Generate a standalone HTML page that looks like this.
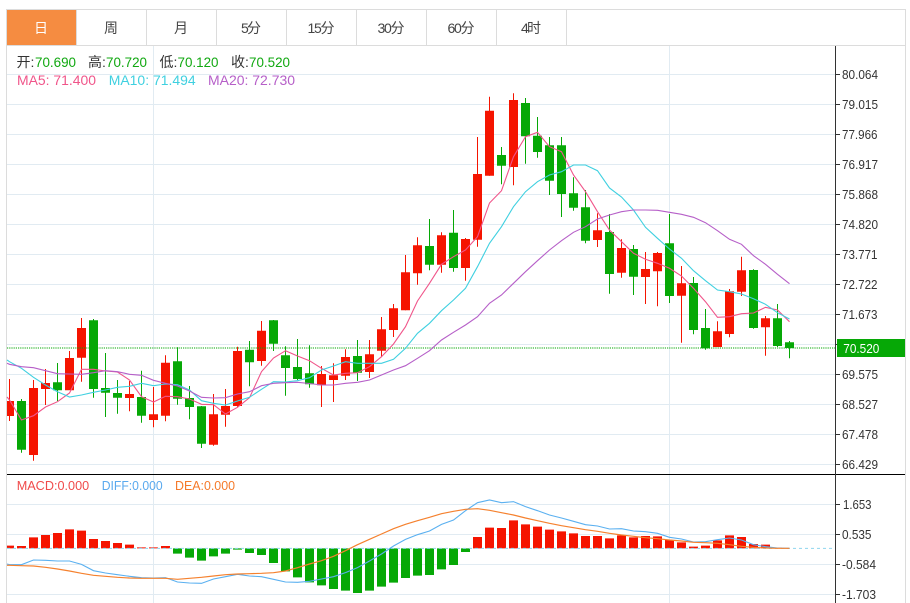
<!DOCTYPE html>
<html>
<head>
<meta charset="utf-8">
<style>
html,body{margin:0;padding:0;background:#fff;width:910px;height:603px;overflow:hidden}
svg{display:block;position:absolute;left:0;top:0}
text{font-family:"Liberation Sans","Noto Sans CJK SC",sans-serif}
</style>
</head>
<body>
<svg width="910" height="603" viewBox="0 0 910 603" xmlns="http://www.w3.org/2000/svg">
<!-- frame -->
<path d="M6.5 603V9.5H905.5V603M6.5 45.5H905.5" fill="none" stroke="#dcdcdc" stroke-width="1"/>
<rect x="7" y="10" width="69" height="35" fill="#f58c41"/>
<path d="M76.5 10V45M146.5 10V45M216.5 10V45M286.5 10V45M356.5 10V45M426.5 10V45M496.5 10V45M566.5 10V45" stroke="#dcdcdc" stroke-width="1"/>
<g font-size="14" fill="#444" text-anchor="middle">
<text x="41" y="33" fill="#fff">日</text>
<text x="111" y="33">周</text>
<text x="181" y="33">月</text>
<text x="251" y="33" textLength="20">5分</text>
<text x="321" y="33" textLength="27">15分</text>
<text x="391" y="33" textLength="27">30分</text>
<text x="461" y="33" textLength="27">60分</text>
<text x="531" y="33" textLength="20">4时</text>
</g>
<!-- grid -->
<path d="M7 74.5H835M7 104.5H835M7 134.5H835M7 164.5H835M7 194.5H835M7 224.5H835M7 254.5H835M7 284.5H835M7 314.5H835M7 344.5H835M7 374.5H835M7 404.5H835M7 434.5H835M7 464.5H835M7 504.5H835M7 534.5H835M7 564.5H835M7 594.5H835M153.5 46V603M669.5 46V603" stroke="#e1ebf2" stroke-width="1" fill="none"/>
<path d="M7 474.5H905" stroke="#000" stroke-width="1"/>
<path d="M835.5 46V603" stroke="#333" stroke-width="1"/>
<path d="M836 74.5H840M836 104.5H840M836 134.5H840M836 164.5H840M836 194.5H840M836 224.5H840M836 254.5H840M836 284.5H840M836 314.5H840M836 344.5H840M836 374.5H840M836 404.5H840M836 434.5H840M836 464.5H840M836 504.5H840M836 534.5H840M836 564.5H840M836 594.5H840" stroke="#333" stroke-width="1"/>
<!-- wicks -->
<path stroke="#f51400" stroke-width="1" fill="none" d="M9.5 379V421M33.5 380V460.7M45.5 369V405M69.5 351V390M81.5 318V381.7M129.5 381V411.3M153.5 387V427.3M165.5 355.3V421.3M213.5 394V445.7M225.5 389V426.7M237.5 346.7V406.7M261.5 321V365.7M321.5 366V407M333.5 363.3V402M345.5 349.3V380M369.5 340V378M381.5 317V356.7M393.5 304V337M405.5 255V310.3M417.5 237.3V284.7M441.5 232.3V272.7M465.5 238V280.7M477.5 137V246.7M489.5 96.7V175.7M513.5 93.3V185.3M597.5 213.3V247M621.5 239.3V277.7M645.5 252V304M657.5 252V306.3M681.5 266V342.7M717.5 321.3V347M729.5 289V337.3M741.5 256.7V296M765.5 316V355.7"/>
<path stroke="#06a806" stroke-width="1" fill="none" d="M21.5 399V452.7M57.5 363V401M93.5 319V397.7M105.5 353V417M117.5 380V413.7M141.5 370.7V422.7M177.5 347.3V404.7M189.5 386V419.3M201.5 406V448M249.5 341V386.3M273.5 320V351M285.5 346.3V395.7M297.5 339V380M309.5 345.3V387.7M357.5 340V381M429.5 219V270.3M453.5 210V271.7M501.5 147V184.3M525.5 98V163.7M537.5 117V157.7M549.5 137V195M561.5 137V217M573.5 177.3V210.7M585.5 190V243.3M609.5 214V293.7M633.5 245V295M669.5 214V303M693.5 277V334.3M705.5 309V349.7M753.5 269.3V328.7M777.5 304V347M789.5 341V358.3"/>
<!-- bodies -->
<path fill="#f51400" d="M7 401H14V416H7ZM29 388H38V455H29ZM41 383H50V389H41ZM65 358H74V390.3H65ZM77 328H86V357.7H77ZM125 394H134V398H125ZM149 414.3H158V420H149ZM161 362.7H170V415.7H161ZM209 414.3H218V444.7H209ZM221 406H230V414.7H221ZM233 351H242V406H233ZM257 330.7H266V361H257ZM317 374H326V385.3H317ZM329 375.3H338V380H329ZM341 357H350V375.7H341ZM365 354.3H374V372H365ZM377 329.3H386V350.7H377ZM389 308.3H398V330H389ZM401 272.3H410V310.3H401ZM413 245.3H422V273.3H413ZM437 235.3H446V264.7H437ZM461 239H470V268H461ZM473 174H482V239.7H473ZM485 110.7H494V175.7H485ZM509 100H518V167H509ZM593 230.3H602V240H593ZM617 248H626V272.7H617ZM641 269H650V277H641ZM653 253H662V271.3H653ZM677 283.3H686V295.7H677ZM713 331.3H722V347H713ZM725 291.3H734V334H725ZM737 270.3H746V291.7H737ZM761 318.3H770V327.3H761Z"/>
<path fill="#06a806" d="M17 401H26V449.7H17ZM53 382.3H62V390.3H53ZM89 320.3H98V389H89ZM101 388H110V392.7H101ZM113 393H122V397.7H113ZM137 397H146V415.7H137ZM173 361.3H182V398.7H173ZM185 398H194V407H185ZM197 406.3H206V443.7H197ZM245 349.7H254V362.3H245ZM269 320.3H278V343.7H269ZM281 355.3H290V368H281ZM293 367H302V379H293ZM305 373.3H314V384.3H305ZM353 356H362V372.7H353ZM425 246H434V264.7H425ZM449 232.7H458V268H449ZM497 155H506V165.7H497ZM521 103H530V136.3H521ZM533 135.7H542V152H533ZM545 145.3H554V180.7H545ZM557 145.3H566V194H557ZM569 193.3H578V207.7H569ZM581 207.3H590V240.7H581ZM605 232H614V274H605ZM629 249H638V276.7H629ZM665 243.3H674V296H665ZM689 283H698V330H689ZM701 328H710V348.3H701ZM749 270H758V328H749ZM773 318.3H782V346H773ZM785 342.3H794V348H785Z"/>
<!-- last price dotted -->
<path d="M7 348H835" stroke="#06a806" stroke-opacity=".5" stroke-width="2" stroke-dasharray="1.2 1" fill="none"/>
<!-- MA lines -->
<polyline fill="none" stroke="#f0558a" stroke-width="1.1" points="7,397 9.5,400 21.5,420 33.5,415.7 45.5,407 57.5,401.7 69.5,393 81.5,369.3 93.5,369.3 105.5,371 117.5,372 129.5,380 141.5,396.7 153.5,402 165.5,396.3 177.5,396.7 189.5,399 201.5,404.3 213.5,404.7 225.5,414 237.5,407.3 249.5,397.7 261.5,371.7 273.5,358 285.5,350.7 297.5,356 309.5,360.7 321.5,368.3 333.5,375 345.5,373.3 357.5,372.7 369.5,366.7 381.5,356.7 393.5,344 405.5,326.7 417.5,301 429.5,283.3 441.5,264.3 453.5,256.7 465.5,250 477.5,236.7 489.5,203 501.5,190.7 513.5,156.7 525.5,136.7 537.5,132.3 549.5,146.7 561.5,151.7 573.5,175 585.5,191.7 597.5,211.7 609.5,230 621.5,241.7 633.5,253.3 645.5,259.3 657.5,263.3 669.5,268.3 681.5,276 693.5,288.3 705.5,301.7 717.5,317.3 729.5,316.7 741.5,313.7 753.5,313 765.5,307.3 777.5,310 789.5,321.7"/>
<polyline fill="none" stroke="#3fd0e0" stroke-width="1.1" points="7,360 9.5,361.7 21.5,368.3 33.5,377.3 45.5,385 57.5,391.7 69.5,397 81.5,395 93.5,392.3 105.5,390 117.5,387.3 129.5,386.3 141.5,383.3 153.5,385.7 165.5,384 177.5,384.7 189.5,390 201.5,400.7 213.5,403.3 225.5,405 237.5,401 249.5,397.3 261.5,389.3 273.5,381.7 285.5,382 297.5,380.7 309.5,377.7 321.5,370 333.5,366 345.5,361.7 357.5,363.3 369.5,363.3 381.5,363.3 393.5,359.3 405.5,348.3 417.5,333.3 429.5,323.3 441.5,310.7 453.5,300 465.5,288.3 477.5,266.7 489.5,243.3 501.5,226.7 513.5,206.7 525.5,191.7 537.5,181.7 549.5,175 561.5,171.7 573.5,165 585.5,165 597.5,170.7 609.5,188 621.5,197 633.5,210 645.5,227.3 657.5,238.3 669.5,249 681.5,258.3 693.5,270.7 705.5,280.7 717.5,290 729.5,291.7 741.5,294 753.5,298.7 765.5,304.3 777.5,312.7 789.5,319"/>
<polyline fill="none" stroke="#b65fc8" stroke-width="1.1" points="7,363.3 9.5,364.3 21.5,366.7 33.5,367.7 45.5,370.7 57.5,373.7 69.5,374 81.5,374.3 93.5,372.7 105.5,370.7 117.5,371.7 129.5,374.3 141.5,375.3 153.5,380.3 165.5,383.3 177.5,386 189.5,391 201.5,397.3 213.5,398 225.5,397.7 237.5,394 249.5,391.7 261.5,385.7 273.5,383.3 285.5,382.7 297.5,382.3 309.5,383.5 321.5,385 333.5,385 345.5,383.3 357.5,382.3 369.5,380 381.5,375 393.5,370 405.5,365.7 417.5,358.3 429.5,350.7 441.5,340 453.5,332.3 465.5,325 477.5,316.7 489.5,303.3 501.5,295 513.5,283.3 525.5,271.7 537.5,260.7 549.5,250 561.5,240.7 573.5,232.3 585.5,226.7 597.5,219 609.5,215 621.5,211.7 633.5,210 645.5,210 657.5,210.3 669.5,212.3 681.5,214.3 693.5,217.3 705.5,222.7 717.5,230.7 729.5,239.3 741.5,244.3 753.5,255.7 765.5,264.3 777.5,274.3 789.5,283.7"/>
<!-- MACD -->
<g transform="translate(0,460) scale(1,0.33333)">
<path fill="#f51400" d="M7 257H14V265H7ZM17 258H26V265H17ZM29 232H38V265H29ZM41 225H50V265H41ZM53 219H62V265H53ZM65 208H74V265H65ZM77 212H86V265H77ZM89 237H98V265H89ZM101 243H110V265H101ZM113 249H122V265H113ZM125 254H134V265H125ZM137 262H146V265H137ZM149 262H158V265H149ZM161 258H170V265H161ZM473 231H482V265H473ZM485 203H494V265H485ZM497 204H506V265H497ZM509 181H518V265H509ZM521 193H530V265H521ZM533 200H542V265H533ZM545 209H554V265H545ZM557 214H566V265H557ZM569 220H578V265H569ZM581 228H590V265H581ZM593 228H602V265H593ZM605 235H614V265H605ZM617 226H626V265H617ZM629 232H638V265H629ZM641 228H650V265H641ZM653 229H662V265H653ZM665 240H674V265H665ZM677 247H686V265H677ZM689 260H698V265H689ZM701 257H710V265H701ZM713 241H722V265H713ZM725 226H734V265H725ZM737 231H746V265H737ZM749 252H758V265H749ZM761 254H770V265H761ZM773 263H782V265H773Z"/>
<path fill="#06a806" d="M173 265H182V281H173ZM185 265H194V293H185ZM197 265H206V302H197ZM209 265H218V289H209ZM221 265H230V281H221ZM233 265H242V269H233ZM245 265H254V279H245ZM257 265H266V285H257ZM269 265H278V309H269ZM281 265H290V334H281ZM293 265H302V352H293ZM305 265H314V367H305ZM317 265H326V376H317ZM329 265H338V387H329ZM341 265H350V392H341ZM353 265H362V399H353ZM365 265H374V392H365ZM377 265H386V380H377ZM389 265H398V368H389ZM401 265H410V354H401ZM413 265H422V347H413ZM425 265H434V345H425ZM437 265H446V328H437ZM449 265H458V315H449ZM461 265H470V276H461Z"/>
<path d="M7 265H835" stroke="#8fd5ee" stroke-width="1" stroke-dasharray="3 3" fill="none" vector-effect="non-scaling-stroke"/>
<polyline fill="none" stroke="#5ab0f0" stroke-width="1.1" vector-effect="non-scaling-stroke" points="7,312 9.5,314 21.5,314 33.5,300 45.5,301 57.5,303 69.5,303 81.5,313 93.5,332 105.5,339 117.5,344 129.5,349 141.5,353 153.5,354 165.5,353 177.5,366 189.5,369 201.5,370 213.5,357 225.5,350 237.5,343 249.5,348 261.5,350 273.5,358 285.5,366 297.5,367 309.5,364 321.5,357 333.5,350 345.5,338 357.5,323 369.5,303 381.5,282 393.5,258 405.5,238 417.5,224 429.5,213 441.5,193 453.5,180 465.5,152 477.5,128 489.5,120 501.5,128 513.5,125 525.5,140 537.5,152 549.5,165 561.5,174 573.5,184 585.5,194 597.5,198 609.5,207 621.5,206 633.5,213 645.5,215 657.5,220 669.5,232 681.5,237 693.5,246 705.5,245 717.5,239 729.5,234 741.5,240 753.5,254 765.5,260 777.5,264 789.5,265"/>
<polyline fill="none" stroke="#f5812e" stroke-width="1.2" vector-effect="non-scaling-stroke" points="7,316 9.5,316 21.5,317 33.5,318 45.5,322 57.5,327 69.5,333 81.5,340 93.5,346 105.5,349 117.5,352 129.5,354 141.5,355 153.5,355 165.5,355 177.5,358 189.5,355 201.5,352 213.5,348 225.5,344 237.5,342 249.5,341 261.5,340 273.5,338 285.5,333 297.5,323 309.5,312 321.5,302 333.5,289 345.5,272 357.5,254 369.5,238 381.5,222 393.5,206 405.5,193 417.5,182 429.5,172 441.5,161 453.5,154 465.5,148 477.5,146 489.5,151 501.5,158 513.5,165 525.5,174 537.5,182 549.5,190 561.5,197 573.5,203 585.5,209 597.5,214 609.5,220 621.5,225 633.5,229 645.5,233 657.5,236 669.5,240 681.5,243 693.5,247 705.5,248 717.5,250 729.5,254 741.5,259 753.5,262 765.5,264 777.5,265 789.5,265"/>
</g>
<!-- header text -->
<g font-size="14">
<text x="16.5" y="67" fill="#333">开:</text><text x="35" y="67" fill="#11a811" textLength="41" lengthAdjust="spacingAndGlyphs">70.690</text>
<text x="88" y="67" fill="#333">高:</text><text x="106" y="67" fill="#11a811" textLength="41" lengthAdjust="spacingAndGlyphs">70.720</text>
<text x="159.5" y="67" fill="#333">低:</text><text x="177.5" y="67" fill="#11a811" textLength="41" lengthAdjust="spacingAndGlyphs">70.120</text>
<text x="231" y="67" fill="#333">收:</text><text x="249" y="67" fill="#11a811" textLength="41" lengthAdjust="spacingAndGlyphs">70.520</text>
<text x="17" y="85" fill="#f0558a" textLength="79" lengthAdjust="spacingAndGlyphs">MA5: 71.400</text>
<text x="108.7" y="85" fill="#3fd0e0" textLength="87" lengthAdjust="spacingAndGlyphs">MA10: 71.494</text>
<text x="208" y="85" fill="#b65fc8" textLength="87" lengthAdjust="spacingAndGlyphs">MA20: 72.730</text>
</g>
<g font-size="13">
<text x="16.7" y="490" fill="#f04b4b" textLength="72.5" lengthAdjust="spacingAndGlyphs">MACD:0.000</text>
<text x="101.7" y="490" fill="#5aa9ee" textLength="61" lengthAdjust="spacingAndGlyphs">DIFF:0.000</text>
<text x="175" y="490" fill="#f57a2a" textLength="60" lengthAdjust="spacingAndGlyphs">DEA:0.000</text>
</g>
<!-- axis labels -->
<g font-size="13" fill="#333" lengthAdjust="spacingAndGlyphs">
<text x="842" y="79" textLength="36" lengthAdjust="spacingAndGlyphs">80.064</text>
<text x="842" y="109" textLength="36" lengthAdjust="spacingAndGlyphs">79.015</text>
<text x="842" y="139" textLength="35.5" lengthAdjust="spacingAndGlyphs">77.966</text>
<text x="842" y="169" textLength="36" lengthAdjust="spacingAndGlyphs">76.917</text>
<text x="842" y="199" textLength="36" lengthAdjust="spacingAndGlyphs">75.868</text>
<text x="842" y="229" textLength="36" lengthAdjust="spacingAndGlyphs">74.820</text>
<text x="842" y="259" textLength="35.5" lengthAdjust="spacingAndGlyphs">73.771</text>
<text x="842" y="289" textLength="35.5" lengthAdjust="spacingAndGlyphs">72.722</text>
<text x="842" y="319" textLength="35.5" lengthAdjust="spacingAndGlyphs">71.673</text>
<text x="842" y="379" textLength="36" lengthAdjust="spacingAndGlyphs">69.575</text>
<text x="842" y="409" textLength="36" lengthAdjust="spacingAndGlyphs">68.527</text>
<text x="842" y="439" textLength="36" lengthAdjust="spacingAndGlyphs">67.478</text>
<text x="842" y="469" textLength="36" lengthAdjust="spacingAndGlyphs">66.429</text>
<text x="843" y="509" textLength="28.5" lengthAdjust="spacingAndGlyphs">1.653</text>
<text x="842" y="539" textLength="29.5" lengthAdjust="spacingAndGlyphs">0.535</text>
<text x="842" y="569" textLength="34" lengthAdjust="spacingAndGlyphs">-0.584</text>
<text x="842" y="599" textLength="34" lengthAdjust="spacingAndGlyphs">-1.703</text>
</g>
<rect x="837" y="339" width="68" height="18" fill="#06a806"/>
<text x="843.3" y="353" font-size="13" fill="#fff" textLength="36" lengthAdjust="spacingAndGlyphs">70.520</text>
</svg>
</body>
</html>
